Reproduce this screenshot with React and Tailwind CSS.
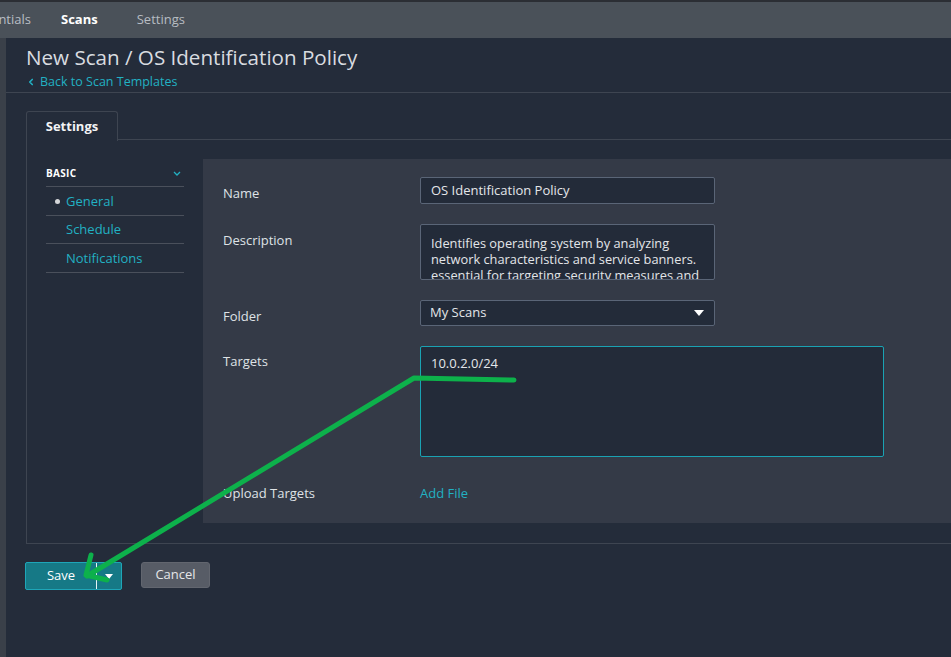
import { ChevronLeft } from 'lucide-react';

const Caret = ({ className, w = 10, h = 6 }) => (
  <svg width={w} height={h} viewBox="0 0 10 6" className={className}>
    <path d="M0 0h10L5 6z" fill="currentColor" />
  </svg>
);

function Field({ label, children, labelTop = 'pt-[7px]' }) {
  return (
    <div className="flex items-start">
      <div className={`w-[197px] shrink-0 text-[13px] leading-[18px] text-[#dfe2e6] ${labelTop}`}>{label}</div>
      {children}
    </div>
  );
}

export default function App() {
  return (
    <div className="relative w-[951px] h-[657px] overflow-hidden bg-[#242c3a] font-['Open_Sans',sans-serif]">
      <div className="h-[2px] bg-[#2b2e34]" />
      <nav className="h-[36px] bg-[#4a5159] flex items-center text-[13px]">
        <div className="w-[31px] overflow-hidden flex justify-end">
          <span className="whitespace-nowrap text-[#b9bec4]">Credentials</span>
        </div>
        <span className="ml-[30px] font-bold text-white">Scans</span>
        <span className="ml-[39px] text-[#b7bcc2]">Settings</span>
      </nav>

      <div className="flex h-[619px]">
        <div className="w-[6px] shrink-0 bg-[#3a4049]" />
        <div className="flex-1 min-w-0">
          <div className="pl-[20px] pt-[5px] h-[55px] border-b border-[#3e4551]">
            <h1 className="text-[20.6px] leading-[28px] text-[#d9dce0]">
              New Scan / OS Identification Policy
            </h1>
            <a className="mt-[3px] flex items-center text-[12.5px] leading-[16px] text-[#22b1c3]">
              <ChevronLeft size={10} strokeWidth={4} className="mr-[4px]" />
              Back to Scan Templates
            </a>
          </div>

          <div className="pl-[19px] pt-[17px]">
            <div className="flex items-end pl-[1px]">
              <div className="w-[92px] h-[30px] border border-b-0 border-[#3e4551] rounded-t-[3px] flex items-center justify-center text-[13px] font-bold text-[#f2f3f5] bg-[#242c3a] relative top-[1px]">
                Settings
              </div>
              <div className="flex-1 border-b border-[#3e4551]" />
            </div>

            <div className="ml-[1px] border-l border-b border-[#3e4551] h-[404px] pt-[19px] pl-[19px] flex">
              <div className="w-[138px] shrink-0 pt-[5px]">
                <div className="flex items-center justify-between h-[23px] border-b border-[#4a505b] pb-[4px]">
                  <span className="text-[10px] font-bold text-white tracking-[0.3px]">BASIC</span>
                  <svg width="8" height="5" viewBox="0 0 8 5" className="mr-[3px] text-[#22b1c3]">
                    <path d="M1 1l3 3 3-3" fill="none" stroke="currentColor" strokeWidth="1.3" />
                  </svg>
                </div>
                {['General', 'Schedule', 'Notifications'].map((t, i) => (
                  <div key={t} className="h-[28.5px] pt-[1px] flex items-center border-b border-[#4a505b] text-[13px] text-[#22b1c3]">
                    <span className="w-[20px] flex justify-center pl-[3px]">
                      {i === 0 && <span className="w-[5px] h-[5px] rounded-full bg-[#d4d6d9]" />}
                    </span>
                    {t}
                  </div>
                ))}
              </div>

              <div className="ml-[19px] flex-1 bg-[#343a47] h-[364px] pt-[18px] pl-[20px] flex flex-col gap-[20px]">
                <Field label="Name">
                  <div className="w-[295px] h-[27px] border border-[#5a6577] rounded-[2px] bg-[#232b39] px-[10px] flex items-center text-[13px] text-[#e3e6e9]">
                    OS Identification Policy
                  </div>
                </Field>
                <Field label="Description">
                  <div className="w-[295px] h-[56px] border border-[#5a6577] rounded-[2px] bg-[#232b39] px-[10px] pt-[10px] overflow-hidden text-[12.8px] leading-[16px] text-[#e3e6e9]">
                    Identifies operating system by analyzing network characteristics and service banners. essential for targeting security measures and
                  </div>
                </Field>
                <Field label="Folder" labelTop="pt-[7px]">
                  <div className="w-[295px] h-[26px] border border-[#5a6577] rounded-[2px] bg-[#232b39] pl-[9px] pr-[10px] flex items-center justify-between text-[13px] text-[#e3e6e9]">
                    My Scans
                    <Caret className="text-white" />
                  </div>
                </Field>
                <Field label="Targets" labelTop="pt-[6px]">
                  <div className="w-[464px] h-[111px] border border-[#1aa2b3] rounded-[2px] bg-[#232b39] px-[10px] pt-[7px] text-[13px] text-[#e3e6e9]">
                    10.0.2.0/24
                  </div>
                </Field>
                <Field label="Upload Targets" labelTop="pt-[7px]">
                  <span className="pt-[7px] text-[13px] leading-[18px] text-[#22b1c3]">Add File</span>
                </Field>
              </div>
            </div>

            <div className="flex items-start gap-[19px] pt-[18px]">
              <div className="w-[97px] h-[28px] border border-[#1ea6b8] rounded-[2px] bg-[#167986] flex items-center text-[13px] text-white">
                <span className="w-[70px] text-center">Save</span>
                <span className="w-px h-full bg-[#e8f4f6]" />
                <span className="flex-1 flex justify-center">
                  <Caret w={8} h={5} />
                </span>
              </div>
              <div className="w-[69px] h-[26px] border border-[#62666f] rounded-[3px] bg-[#575c66] flex items-center justify-center text-[13px] text-[#e6e7e9]">
                Cancel
              </div>
            </div>
          </div>
        </div>
      </div>

      <svg className="absolute inset-0 pointer-events-none" width="951" height="657" viewBox="0 0 951 657">
        <g fill="none" stroke="#0db14b" strokeWidth="5" strokeLinecap="round" strokeLinejoin="round">
          <polyline points="514,380 414,378 87,576" />
          <polyline points="91,555 86,575 107,580" />
        </g>
      </svg>
    </div>
  );
}
